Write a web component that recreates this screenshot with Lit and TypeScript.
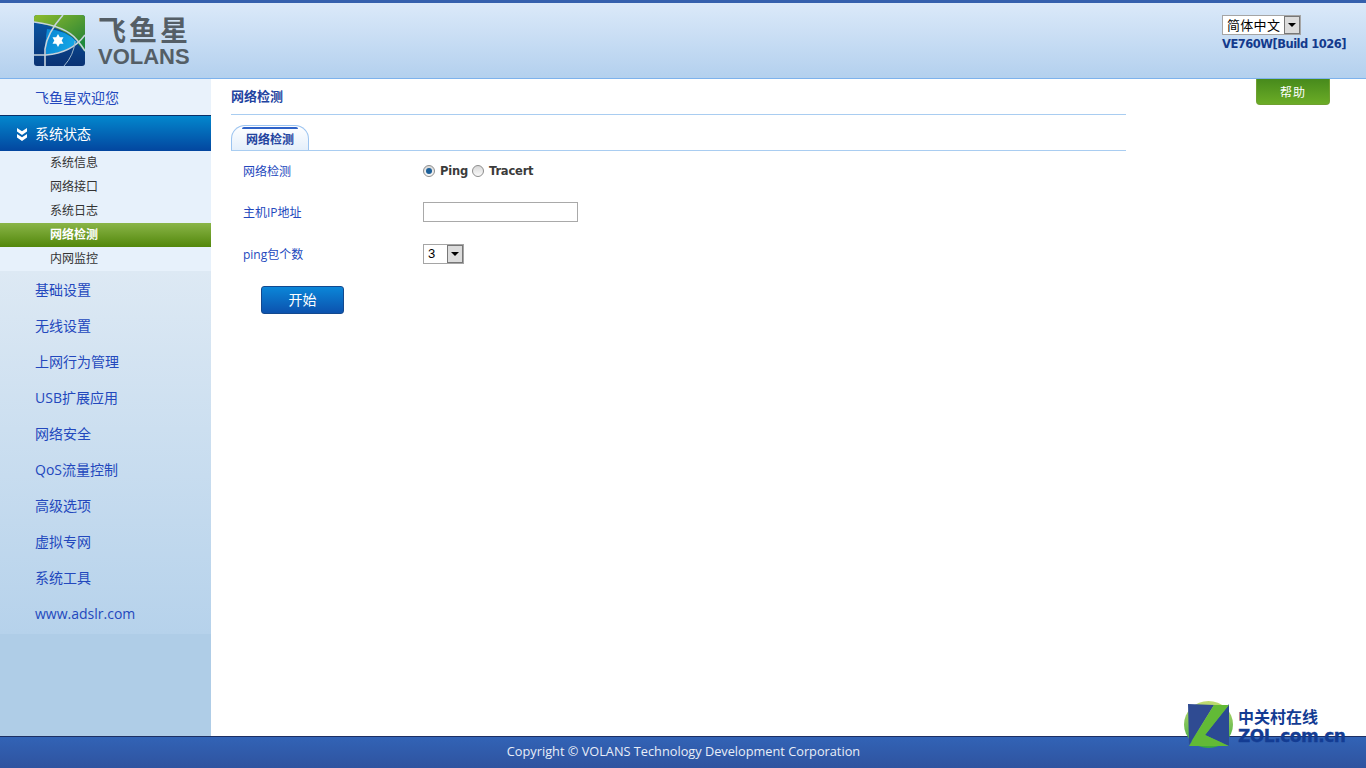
import { LitElement, html, css, svg } from "lit";
import { customElement } from "lit/decorators.js";

@customElement("app-root")
export class AppRoot extends LitElement {
  static styles = css`
    :host { display: block; width: 1366px; height: 768px; position: relative; overflow: hidden; background: #fff; font-family: "Open Sans", "Noto Sans CJK SC", sans-serif; }
    .page { display: flex; flex-direction: column; height: 768px; }
    .header { flex: none; border-top: 3px solid #3560ad; border-bottom: 1px solid #7db2ec; background: linear-gradient(#dbe9f9, #b3d0ee); display: flex; justify-content: space-between; padding-left: 34px; padding-right: 20px; height: 75px; }
    .logo { display: flex; gap: 13px; padding-top: 12px; height: 52px; }
    .logo-text { display: flex; flex-direction: column; color: #545e66; width: 92px; }
    .brand-cn { font: 700 28px/28px "Noto Sans CJK SC", sans-serif; letter-spacing: 3px; height: 32px; white-space: nowrap; }
    .brand-en { font: 700 22px/21px "Liberation Sans", sans-serif; white-space: nowrap; }
    .hdr-right { display: flex; flex-direction: column; align-items: flex-start; padding-top: 12px; width: 124px; }
    .version { font: 700 11.5px/16px "DejaVu Sans", sans-serif; color: #143a8c; letter-spacing: -0.5px; white-space: nowrap; margin-top: 1px; }
    .select { display: flex; align-items: center; background: #fff; border: 1px solid #a5a5a5; box-sizing: border-box; color: #000; }
    .lang { width: 79px; height: 20px; font: 13px/18px "Noto Sans CJK SC", sans-serif; letter-spacing: 0.3px; }
    .lang span.t { flex: 1; padding-left: 4px; }
    .arrow { width: 16px; height: 18px; box-sizing: border-box; border: 1px solid #777; background: #dcdcdc; display: flex; align-items: center; justify-content: center; flex: none; }
    .arrow i { width: 0; height: 0; border: 4px solid transparent; border-top-color: #000; border-bottom: 0; }
    .body { flex: 1; display: flex; min-height: 0; }
    .side { width: 211px; flex: none; background: #afcde7; display: flex; flex-direction: column; }
    .welcome { height: 36px; background: #e9f2fb; color: #2348bd; font-size: 14px; line-height: 38px; padding-left: 35px; }
    .active { height: 35px; border-top: 1px solid #0b2f66; background: linear-gradient(#0387cd, #03469f); color: #fff; font-size: 14px; line-height: 35px; display: flex; align-items: flex-start; gap: 8px; padding-left: 17px; }
    .active svg { flex: none; margin-top: 12px; }
    .sub { background: #e7f1fb; height: 120px; }
    .sub div { height: 24px; line-height: 24px; padding-left: 50px; font-size: 12px; color: #333; }
    .sub div.on { background: linear-gradient(#8ab548, #52870b); color: #fff; font-weight: 700; }
    .rest { background: linear-gradient(#dde9f4, #b6d2eb); height: 363px; padding-top: 1px; box-sizing: border-box; }
    .rest div { height: 36px; line-height: 36px; padding-left: 35px; font-size: 14px; color: #2348bd; }
    .main { flex: 1; padding: 0 240px 0 20px; min-width: 0; }
    .title { height: 35px; border-bottom: 1px solid #a9cdf1; font: 700 13px/35px "Open Sans", "Noto Sans CJK SC", sans-serif; color: #23439f; }
    .tabs { height: 25px; margin-top: 10px; border-bottom: 1px solid #a9cdf1; display: flex; align-items: flex-end; }
    .tab { width: 78px; height: 25px; box-sizing: border-box; border: 1px solid #9cc4f0; border-bottom: 0; border-radius: 14px 14px 0 0; background: linear-gradient(#fff, #e4effb); position: relative; text-align: center; font: 700 12px/27px "Open Sans", "Noto Sans CJK SC", sans-serif; color: #23439f; }
    .tab::before { content: ""; position: absolute; left: 10px; right: 10px; top: 1px; height: 2px; background: #2e62c8; border-radius: 2px 2px 0 0; }
    .form { padding: 0 0 0 12px; }
    .row { display: flex; align-items: center; }
    .row label { width: 180px; flex: none; font-size: 12px; color: #2348bd; }
    .r1 { height: 40px; }
    .r2 { height: 42px; }
    .r3 { height: 41px; }
    .radio { width: 12px; height: 12px; border-radius: 50%; box-sizing: border-box; border: 1px solid #8d8d8d; background: linear-gradient(#d8d8d8, #fafafa); flex: none; display: flex; align-items: center; justify-content: center; }
    .radio.on i { width: 6px; height: 6px; border-radius: 50%; background: #1b5f99; display: block; }
    .opt { font: 700 11.5px/14px "DejaVu Sans", sans-serif; color: #3b3b3b; margin: 0 4px 0 5px; letter-spacing: -0.2px; }
    .radios { display: flex; align-items: center; margin-top: -1px; }
    .text { width: 155px; height: 20px; box-sizing: border-box; border: 1px solid #a9a9a9; background: #fff; }
    .count { width: 41px; height: 20px; font: 13px/18px "Liberation Sans", sans-serif; }
    .count span.t { flex: 1; padding-left: 4px; }
    .start { display: block; width: 83px; height: 28px; margin: 12px 0 0 30px; box-sizing: border-box; border: 1px solid #13498f; border-radius: 3px; background: linear-gradient(#0b86d8, #0c52ae); color: #fff; font: 14px/24px "Noto Sans CJK SC", sans-serif; text-align: center; padding: 0 0 2px; }
    .footer { height: 31px; flex: none; border-top: 1px solid #1c2f63; background: linear-gradient(#3263b6, #2f539f); color: #e8eef8; font-size: 12.75px; line-height: 28px; text-align: center; padding-left: 1px; box-sizing: content-box; }
    .help { position: absolute; left: 1256px; top: 79px; width: 74px; height: 26px; box-sizing: border-box; border: 1px solid #6fa030; border-top: 0; border-radius: 0 0 4px 4px; background: linear-gradient(#478a1c, #6bac26); color: #fff; font: 12px/26px "Noto Sans CJK SC", sans-serif; text-align: center; letter-spacing: 1px; }
    .zol { position: absolute; left: 1184px; top: 701px; display: flex; align-items: flex-start; }
    .zol-text { margin: 6px 0 0 5px; color: #133c93; display: flex; flex-direction: column; }
    .zol-cn { font: 700 16px/19px "Noto Sans CJK SC", sans-serif; white-space: nowrap; }
    .zol-en { font: 700 17px/17px "DejaVu Sans", sans-serif; letter-spacing: -0.47px; white-space: nowrap; margin-top: 2px; -webkit-text-stroke: 0.3px #133c93; }
  `;

  logo() {
    return svg`<svg width="51" height="51" viewBox="0 0 51 51">
      <defs>
        <linearGradient id="g1" x1="0" y1="0" x2="1" y2="1"><stop offset="0" stop-color="#8dbb2c"/><stop offset="1" stop-color="#1c7d38"/></linearGradient>
        <linearGradient id="b1" x1="0" y1="0" x2="0" y2="1"><stop offset="0" stop-color="#0a5aa8"/><stop offset="1" stop-color="#0a3273"/></linearGradient>
        <linearGradient id="c1" x1="0" y1="0" x2="1" y2="0.3"><stop offset="0" stop-color="#0a84d2"/><stop offset="1" stop-color="#15a7e6"/></linearGradient>
        <clipPath id="rr"><rect width="51" height="51" rx="3"/></clipPath>
      </defs>
      <g clip-path="url(#rr)">
        <rect width="51" height="51" fill="url(#b1)"/>
        <path d="M0 0H51V36Q38 14 0 7Z" fill="url(#g1)"/>
        <path d="M51 21L43 28L51 37Z" fill="#1f8a3d"/>
        <path d="M13 14Q32 15 43 27Q36 36 12 40Q11 26 13 14Z" fill="url(#c1)"/>
        <path d="M0 7Q32 11 43 25Q48 31 51 36" fill="none" stroke="#c6d3dc" stroke-width="1.6"/>
        <path d="M51 20Q38 38 12 40H0" fill="none" stroke="#c6d3dc" stroke-width="1.6"/>
        <path d="M29 0Q13 18 11 34Q11 44 11 51" fill="none" stroke="#c6d3dc" stroke-width="1.6"/>
        <path d="M41 26Q40 40 30 51" fill="none" stroke="#9fb8cc" stroke-width="1"/>
        <path d="M24 19l1.8 3.2h3.7l-1.8 3.3 1.8 3.3h-3.7l-1.8 3.2-1.8-3.2h-3.7l1.8-3.3-1.8-3.3h3.7z" fill="#fff"/>
      </g>
    </svg>`;
  }

  chevrons() {
    return svg`<svg width="10" height="13" viewBox="0 0 10 13"><path d="M0 0L5 3.3 10 0V3.4L5 7 0 3.4ZM0 6L5 9.3 10 6V9.4L5 13 0 9.4Z" fill="#fff"/></svg>`;
  }

  zolMark() {
    return svg`<svg width="49" height="47" viewBox="0 0 49 47">
      <defs><linearGradient id="zg" x1="0" y1="0" x2="0" y2="1"><stop offset="0" stop-color="#c2dc72"/><stop offset="1" stop-color="#37a93c"/></linearGradient></defs>
      <ellipse cx="24.5" cy="23.5" rx="24.5" ry="23.5" fill="url(#zg)"/>
      <path d="M4 3L30 4L5 44Z" fill="#2f4b92"/>
      <path d="M45 3V45L21 34Z" fill="#2b4a94"/>
      <path d="M30 4H45L21 34L45 45H5Z" fill="#62ba36"/>
    </svg>`;
  }

  render() {
    const subs = ["系统信息", "网络接口", "系统日志", "网络检测", "内网监控"];
    const rest = ["基础设置", "无线设置", "上网行为管理", "USB扩展应用", "网络安全", "QoS流量控制", "高级选项", "虚拟专网", "系统工具", "www.adslr.com"];
    return html`
      <div class="page">
        <header class="header">
          <div class="logo">
            ${this.logo()}
            <div class="logo-text"><div class="brand-cn">飞鱼星</div><div class="brand-en">VOLANS</div></div>
          </div>
          <div class="hdr-right">
            <div class="select lang"><span class="t">简体中文</span><span class="arrow"><i></i></span></div>
            <div class="version">VE760W[Build 1026]</div>
          </div>
        </header>
        <div class="body">
          <nav class="side">
            <div class="welcome">飞鱼星欢迎您</div>
            <div class="active">${this.chevrons()}<span>系统状态</span></div>
            <div class="sub">${subs.map((s) => html`<div class=${s === "网络检测" ? "on" : ""}>${s}</div>`)}</div>
            <div class="rest">${rest.map((s) => html`<div>${s}</div>`)}</div>
          </nav>
          <main class="main">
            <div class="title">网络检测</div>
            <div class="tabs"><div class="tab">网络检测</div></div>
            <div class="form">
              <div class="row r1">
                <label>网络检测</label>
                <div class="radios">
                  <span class="radio on"><i></i></span><span class="opt">Ping</span>
                  <span class="radio"></span><span class="opt">Tracert</span>
                </div>
              </div>
              <div class="row r2"><label>主机IP地址</label><div class="text"></div></div>
              <div class="row r3"><label>ping包个数</label><div class="select count"><span class="t">3</span><span class="arrow"><i></i></span></div></div>
            </div>
            <button class="start">开始</button>
          </main>
        </div>
        <footer class="footer">Copyright © VOLANS Technology Development Corporation</footer>
      </div>
      <div class="help">帮助</div>
      <div class="zol">
        ${this.zolMark()}
        <div class="zol-text"><div class="zol-cn">中关村在线</div><div class="zol-en">ZOL.com.cn</div></div>
      </div>
    `;
  }
}
